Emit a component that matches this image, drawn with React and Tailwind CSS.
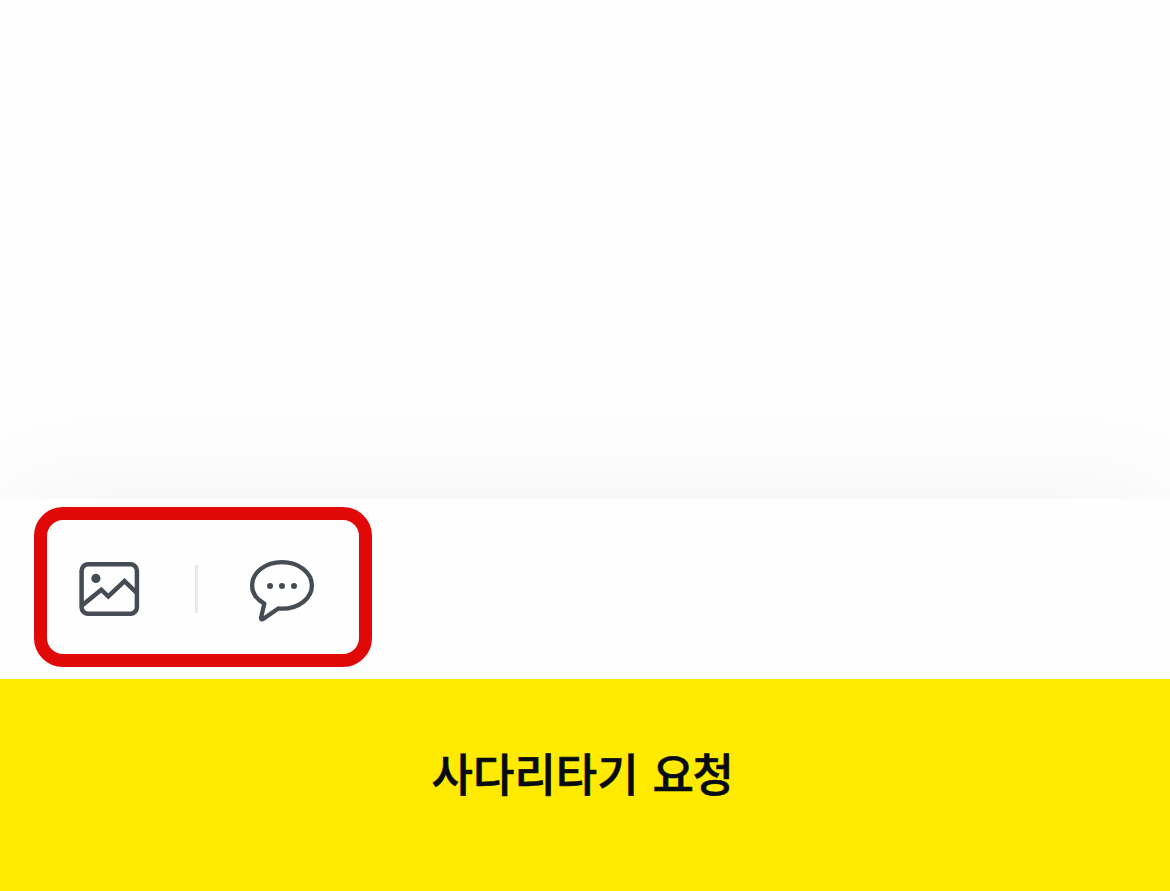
import React from "react";

function PhotoIcon() {
  return (
    <svg width="61" height="54" viewBox="0 0 61 54" fill="none" stroke="#454c53" strokeWidth="4.5">
      <rect x="2.6" y="2.2" width="55.3" height="49.6" rx="6.6" />
      <circle cx="16.9" cy="16.4" r="4.6" fill="#454c53" stroke="none" />
      <path d="M3 43.5 22.3 27.7 29.3 34.5 45.5 19.1 58 31.2" />
    </svg>
  );
}

function ChatIcon() {
  return (
    <svg width="66" height="66" viewBox="0 0 66 66" fill="none">
      <path
        d="M33 6.1C16.4 6.1 3.1 16.5 3.1 29.500c0 7.500 4.700 14 12.200 18.200L12.100 61.400c-.4 1.800.6 2.400 2 1.500L29.300 52.400c1.200.2 2.500.3 3.700.3 16.600 0 29.900-10.300 29.900-23.200S49.600 6.100 33 6.100Z"
        stroke="#454c53"
        strokeWidth="4.3"
        strokeLinejoin="round"
      />
      <g fill="#454c53">
        <circle cx="21" cy="30" r="3" />
        <circle cx="33" cy="30" r="3" />
        <circle cx="45" cy="30" r="3" />
      </g>
    </svg>
  );
}

export default function App() {
  return (
    <div className="flex h-[891px] w-[1170px] flex-col overflow-hidden bg-[#fefefe] font-['Noto_Sans_CJK_KR',sans-serif]">
      <main className="h-[499px] shrink-0" />

      {/* attachment toolbar */}
      <div className="flex h-[180px] shrink-0 bg-[#fefefe] pt-2 pl-[34px] shadow-[0_0_120px_rgba(0,0,0,0.05)]">
        <div className="flex h-40 w-[338px] items-center rounded-[29px] border-[13px] border-[#e10808] pt-1 pl-8">
          <button type="button" aria-label="사진">
            <PhotoIcon />
          </button>
          <div className="ml-[55px] h-12 w-[3px] bg-[#e6eaed]" />
          <button type="button" aria-label="메시지" className="ml-[51px]">
            <ChatIcon />
          </button>
        </div>
      </div>

      <button
        type="button"
        className="flex h-[212px] shrink-0 justify-center gap-[14px] bg-[#ffea00] pt-[60px] pr-[6px] text-[45px] leading-[68px] font-medium text-[#060b11] [-webkit-text-stroke:0.6px_#060b11]"
      >
        <span>사다리타기</span>
        <span className="tracking-[-1.5px]">요청</span>
      </button>
    </div>
  );
}
